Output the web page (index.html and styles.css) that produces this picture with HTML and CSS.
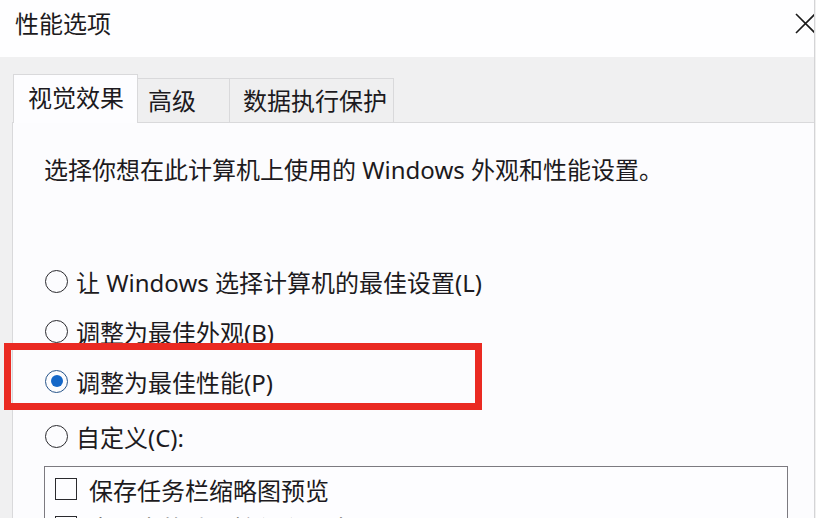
FILE: index.html
```html
<!DOCTYPE html>
<html lang="zh-CN">
<head>
<meta charset="utf-8">
<title>性能选项</title>
<link rel="stylesheet" href="styles.css">
</head>
<body>
<div class="window">
  <div class="titlebar">
    <div class="title">性能选项</div>
    <svg class="close" width="21" height="21" viewBox="0 0 21 21" aria-hidden="true">
      <path d="M1 1 L20 20 M20 1 L1 20" stroke="#1a1a1a" stroke-width="1.6" fill="none"/>
    </svg>
  </div>
  <div class="main">
    <div class="tabs">
      <div class="tab tab-active">视觉效果</div>
      <div class="tab tab-adv">高级</div>
      <div class="tab tab-dep">数据执行保护</div>
    </div>
    <div class="panel">
      <div class="desc">选择你想在此计算机上使用的 Windows 外观和性能设置。</div>
      <div class="options">
        <div class="radio-row"><span class="radio"></span><span>让 Windows 选择计算机的最佳设置(L)</span></div>
        <div class="radio-row"><span class="radio"></span><span>调整为最佳外观(B)</span></div>
        <div class="radio-row row-marked"><span class="radio radio-on"><span class="dot"></span></span><span>调整为最佳性能(P)</span><span class="highlight"></span></div>
        <div class="radio-row row-custom"><span class="radio"></span><span>自定义(C):</span></div>
      </div>
      <div class="listbox">
        <div class="check-row"><span class="checkbox"></span><span>保存任务栏缩略图预览</span></div>
        <div class="check-row"><span class="checkbox"></span><span>窗口内的动画控件和元素</span></div>
        <div class="check-row"><span class="checkbox"></span><span>淡入淡出或滑动菜单到视图</span></div>
      </div>
    </div>
  </div>
</div>
</body>
</html>
```
FILE: styles.css
```css
html {
  margin: 0;
  background: #f0f0f0;
  overflow: hidden;
}
body {
  margin: 0;
  width: 814px;
  height: 518px;
  overflow: hidden;
  border-right: 1px solid #d4d4d6;
  background: #f0f0f1;
  font-family: "Noto Sans", "Noto Sans CJK SC", sans-serif;
  font-size: 24px;
  color: #1c1a20;
}
.window {
  width: 814px;
  height: 518px;
  display: flex;
  flex-direction: column;
}
.titlebar {
  height: 57px;
  flex: none;
  background: #fefeff;
  display: flex;
  justify-content: space-between;
  align-items: flex-start;
  padding-left: 15px;
  box-sizing: border-box;
}
.title {
  line-height: 32px;
  margin-top: 8px;
}
.close {
  margin-top: 13px;
  margin-right: -2px;
}
.main {
  flex: 1;
  padding: 17px 0 0 12px;
  display: flex;
  flex-direction: column;
  min-height: 0;
}
.tabs {
  display: flex;
  align-items: flex-end;
  height: 48px;
  margin-left: 1px;
  position: relative;
  z-index: 1;
  flex: none;
}
.tab {
  box-sizing: border-box;
  display: flex;
  align-items: center;
  border-top: 1px solid #d9d9db;
  border-right: 1px solid #d9d9db;
  background: #efeff0;
  height: 44px;
  line-height: 30px;
}
.tab-active {
  width: 125px;
  height: 49px;
  margin-bottom: -1px;
  border-left: 1px solid #d9d9db;
  background: #fdfdff;
  padding-left: 14px;
  padding-bottom: 2px;
}
.tab-adv {
  width: 92px;
  padding-left: 10px;
  padding-top: 1px;
}
.tab-dep {
  width: 164px;
  padding-left: 13px;
  padding-top: 1px;
}
.panel {
  flex: 1;
  background: #fcfcfe;
  border-top: 1px solid #d9d9db;
  border-left: 1px solid #d9d9db;
  padding-left: 31px;
  min-height: 0;
}
.desc {
  line-height: 32px;
  margin-top: 31px;
}
.options {
  margin-top: 70px;
}
.radio-row {
  display: flex;
  align-items: center;
  height: 50px;
}
.row-marked {
  position: relative;
}
.row-custom {
  margin-top: 5px;
}
.radio {
  width: 23px;
  height: 23px;
  flex: none;
  box-sizing: border-box;
  border: 1.6px solid #2a2a2e;
  border-radius: 50%;
  margin-left: 1px;
  margin-right: 8px;
  display: flex;
  align-items: center;
  justify-content: center;
}
.radio-on {
  border-color: #27558a;
}
.dot {
  width: 12px;
  height: 12px;
  border-radius: 50%;
  background: #1467c8;
}
.highlight {
  position: absolute;
  left: -40px;
  top: -13px;
  width: 478px;
  height: 67px;
  box-sizing: border-box;
  border: 7px solid #ea2a22;
}
.listbox {
  margin-top: 5px;
  width: 744px;
  box-sizing: border-box;
  border: 1px solid #7c7a80;
  background: #fdfdff;
  padding: 3px 0 0 10px;
}
.check-row {
  display: flex;
  align-items: center;
  height: 38px;
}
.checkbox {
  width: 22px;
  height: 22px;
  flex: none;
  box-sizing: border-box;
  border: 1.6px solid #2a2a2e;
  margin-right: 12px;
}
```
